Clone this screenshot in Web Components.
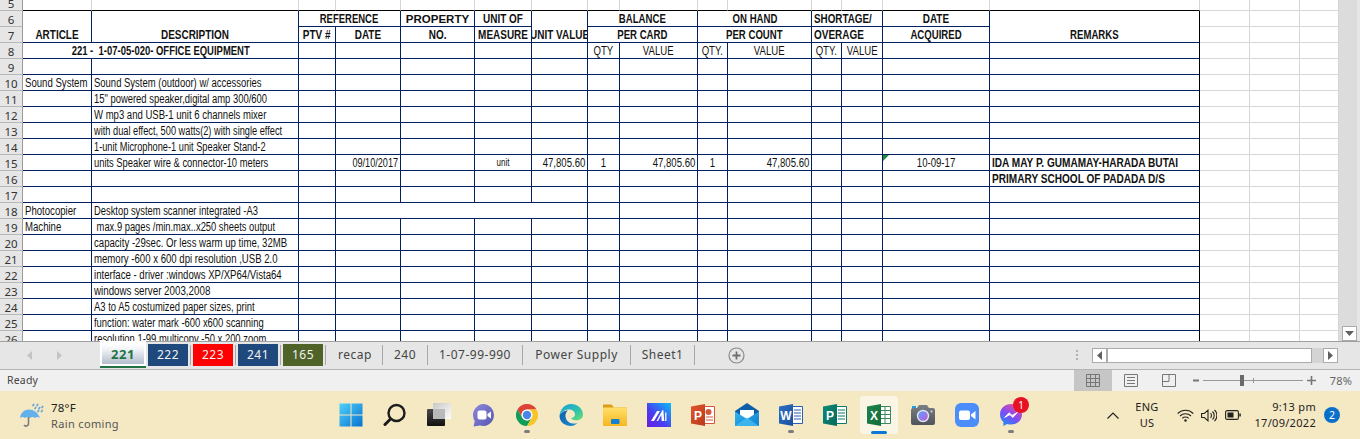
<!DOCTYPE html>
<html>
<head>
<meta charset="utf-8">
<title>Excel sheet</title>
<style>
  html, body { margin: 0; padding: 0; width: 1360px; height: 439px; overflow: hidden; background: #e6e6e6; }
  body { display: flex; flex-direction: column; font-family: "Noto Sans", sans-serif; }
</style>
</head>
<body>
<xl-sheet></xl-sheet>
<xl-tabbar>
  <xl-tab kind="active">221</xl-tab>
  <xl-tab color="#1f497d">222</xl-tab>
  <xl-tab color="#ff0000">223</xl-tab>
  <xl-tab color="#1f497d">241</xl-tab>
  <xl-tab color="#4f6228">165</xl-tab>
  <xl-tab width="55">recap</xl-tab>
  <xl-tab width="45">240</xl-tab>
  <xl-tab width="95">1-07-99-990</xl-tab>
  <xl-tab width="108">Power Supply</xl-tab>
  <xl-tab width="64">Sheet1</xl-tab>
</xl-tabbar>
<xl-status></xl-status>
<xl-taskbar></xl-taskbar>

<script>
  // column right edges, in page pixels (the line sits on this pixel)
  const COL_LINES = [22, 91, 298, 335, 400, 474, 531, 587, 619, 697, 727, 811, 841, 882, 989, 1199, 1249, 1299, 1338];
  const FIRST_ROW = 5;
  const LAST_ROW = 26;
  const TABLE_LAST_COL = 15;

  // r row, c col, rs / cs spans, a align, k extra classes, s horizontal squeeze
  const CELLS = [
    { r: 6, c: 1, rs: 2, t: "ARTICLE", a: "c", k: "b low" },
    { r: 6, c: 2, rs: 2, t: "DESCRIPTION", a: "c", k: "b low" },
    { r: 6, c: 3, cs: 2, t: "REFERENCE", a: "c", k: "b", s: .79 },
    { r: 6, c: 5, t: "PROPERTY", a: "c", k: "b wide" },
    { r: 6, c: 6, t: "UNIT OF", a: "c", k: "b" },
    { r: 6, c: 7, rs: 2, t: "UNIT VALUE", a: "c", k: "b low" },
    { r: 6, c: 8, cs: 2, t: "BALANCE", a: "c", k: "b", s: .8 },
    { r: 6, c: 10, cs: 2, t: "ON HAND", a: "c", k: "b", s: .8 },
    { r: 6, c: 12, cs: 2, t: "SHORTAGE/", a: "l", k: "b", s: .82 },
    { r: 6, c: 14, t: "DATE", a: "c", k: "b" },
    { r: 6, c: 15, rs: 2, t: "REMARKS", a: "c", k: "b low", s: .8 },
    { r: 7, c: 3, t: "PTV #", a: "c", k: "b" },
    { r: 7, c: 4, t: "DATE", a: "c", k: "b" },
    { r: 7, c: 5, t: "NO.", a: "c", k: "b" },
    { r: 7, c: 6, t: "MEASURE", a: "c", k: "b" },
    { r: 7, c: 8, cs: 2, t: "PER CARD", a: "c", k: "b", s: .8 },
    { r: 7, c: 10, cs: 2, t: "PER COUNT", a: "c", k: "b", s: .8 },
    { r: 7, c: 12, cs: 2, t: "OVERAGE", a: "l", k: "b" },
    { r: 7, c: 14, t: "ACQUIRED", a: "c", k: "b", s: .8 },
    { r: 8, c: 1, cs: 2, t: "221 -&nbsp; 1-07-05-020- OFFICE EQUIPMENT", a: "c", k: "b", s: .79 },
    { r: 8, c: 8, t: "QTY", a: "c" },
    { r: 8, c: 9, t: "VALUE", a: "c" },
    { r: 8, c: 10, t: "QTY.", a: "c" },
    { r: 8, c: 11, t: "VALUE", a: "c" },
    { r: 8, c: 12, t: "QTY.", a: "c" },
    { r: 8, c: 13, t: "VALUE", a: "c" },
    { r: 10, c: 1, t: "Sound System" },
    { r: 10, c: 2, t: "Sound System (outdoor) w/ accessories", s: .79 },
    { r: 11, c: 2, t: "15\" powered speaker,digital amp 300/600", s: .785 },
    { r: 12, c: 2, t: "W mp3 and USB-1 unit 6 channels mixer", s: .795 },
    { r: 13, c: 2, t: "with dual effect, 500 watts(2) with single effect", s: .77 },
    { r: 14, c: 2, t: "1-unit Microphone-1 unit Speaker Stand-2", s: .77 },
    { r: 15, c: 2, t: "units Speaker wire &amp; connector-10 meters", s: .78 },
    { r: 15, c: 4, t: "09/10/2017", a: "r", s: .76 },
    { r: 15, c: 6, t: "unit", a: "c", k: "small" },
    { r: 15, c: 7, t: "47,805.60", a: "r" },
    { r: 15, c: 8, t: "1", a: "c" },
    { r: 15, c: 9, t: "47,805.60", a: "r" },
    { r: 15, c: 10, t: "1", a: "c" },
    { r: 15, c: 11, t: "47,805.60", a: "r" },
    { r: 15, c: 14, t: "10-09-17", a: "c", k: "flag" },
    { r: 15, c: 15, t: "IDA MAY P. GUMAMAY-HARADA BUTAI", k: "b", s: .84 },
    { r: 16, c: 15, t: "PRIMARY SCHOOL OF PADADA D/S", k: "b", s: .84 },
    { r: 18, c: 1, t: "Photocopier" },
    { r: 18, c: 2, t: "Desktop system scanner integrated -A3", s: .78 },
    { r: 18, c: 4, cs: 4, t: "" },
    { r: 19, c: 1, t: "Machine" },
    { r: 19, c: 2, t: "&nbsp;max.9 pages /min.max..x250 sheets output", s: .78 },
    { r: 20, c: 2, t: "capacity -29sec. Or less warm up time, 32MB" },
    { r: 21, c: 2, t: "memory -600 x 600 dpi resolution ,USB 2.0", s: .8 },
    { r: 22, c: 2, t: "interface - driver :windows XP/XP64/Vista64", s: .8 },
    { r: 23, c: 2, t: "windows server 2003,2008", s: .815 },
    { r: 24, c: 2, t: "A3 to A5 costumized paper sizes, print", s: .787 },
    { r: 25, c: 2, t: "function: water mark -600 x600 scanning", s: .785 },
    { r: 26, c: 2, t: "resolution 1-99 multicopy -50 x 200 zoom", s: .785 }
  ];

  class XlSheet extends HTMLElement {
    constructor() {
      super();
      this.attachShadow({ mode: "open" });
    }

    connectedCallback() {
      this.render();
    }

    buildCells() {
      const widths = COL_LINES.map((x, i) => (i === 0 ? x + 1 : x - COL_LINES[i - 1]));
      const taken = new Set();
      const specs = new Map();
      CELLS.forEach(s => {
        specs.set(s.r + ":" + s.c, s);
        for (let r = s.r; r < s.r + (s.rs || 1); r++) {
          for (let c = s.c; c < s.c + (s.cs || 1); c++) {
            if (r !== s.r || c !== s.c) taken.add(r + ":" + c);
          }
        }
      });

      let html = "";
      for (let r = FIRST_ROW; r <= LAST_ROW; r++) {
        html += `<div class="head ${r === 5 ? "clip" : ""}" style="grid-row:${r - 4};grid-column:1"><span>${r}</span></div>`;
        for (let c = 1; c < COL_LINES.length; c++) {
          const key = r + ":" + c;
          if (taken.has(key)) continue;
          const s = specs.get(key) || {};
          const inTable = r >= 6 && c <= TABLE_LAST_COL;
          const endRow = r + (s.rs || 1) - 1;
          const endCol = c + (s.cs || 1) - 1;
          const cls = ["cell", inTable ? "in" : "out", "a-" + (s.a || "l"), s.k || ""];
          if (r === 5 && c <= TABLE_LAST_COL) cls.push("top");
          if (endCol === TABLE_LAST_COL && r >= 6) cls.push("edge");
          const squeeze = s.s ? ` style="--sx:${s.s}"` : "";
          const text = s.t ? `<span${squeeze}>${s.t}</span>` : "";
          html += `<div class="${cls.join(" ")}" style="grid-row:${r - 4}/${endRow - 3};grid-column:${c + 1}/${endCol + 2}">${text}</div>`;
        }
      }
      return { html, widths };
    }

    render() {
      const { html, widths } = this.buildCells();
      this.shadowRoot.innerHTML = `
        <style>
          :host { display: flex; height: 342px; box-sizing: border-box; border-bottom: 1px solid #a0a0a0; flex: none; }

          .grid {
            width: 1339px;
            height: 341px;
            overflow: hidden;
            background: #fff;
            display: grid;
            grid-template-columns: ${widths.map(w => w + "px").join(" ")};
            grid-template-rows: 11px repeat(${LAST_ROW - 5}, 16px);
            font-family: "Liberation Sans", Arial, sans-serif;
            font-size: 12px;
            color: #111;
          }

          .head {
            box-sizing: border-box;
            background: #e6e6e6;
            border-right: 1px solid #9a9a9a;
            border-bottom: 1px solid #b8b8b8;
            padding-top: 1px;
            display: flex;
            align-items: center;
            justify-content: center;
            overflow: hidden;
            font: 11.5px "Noto Sans", sans-serif;
            color: #333;
          }
          .head.clip { align-items: flex-end; padding-top: 0; }
          .head.clip span { line-height: 14px; margin-bottom: -1px; }

          .cell {
            box-sizing: border-box;
            border-right: 1px solid #d6d6d6;
            border-bottom: 1px solid #d6d6d6;
            padding-top: 1px;
            display: flex;
            align-items: center;
            overflow: hidden;
            white-space: nowrap;
            position: relative;
            line-height: 14px;
          }
          .cell.in { border-color: #002060; }
          .cell.top { border-bottom-color: #000; }
          .cell.edge { border-right-color: #000; }
          .cell span {
            flex: none;
            display: inline-block;
            transform: scaleX(var(--sx, .8));
          }
          .a-l { justify-content: flex-start; padding-left: 2px; }
          .a-l span { transform-origin: left center; }
          .a-c { justify-content: center; }
          .a-r { justify-content: flex-end; padding-right: 2px; }
          .a-r span { transform-origin: right center; }
          .b { font-weight: 700; --sx: .83; }
          .low { align-items: flex-end; }
          .wide { --sx: 1; font-size: 11.5px; }
          .small { font-size: 10px; }
          .flag::before {
            content: "";
            position: absolute;
            left: 0;
            top: 0;
            border-top: 6px solid #1e8a3c;
            border-right: 6px solid transparent;
          }

          .vscroll {
            width: 21px;
            background: linear-gradient(to right, #dcdcdc 18px, #e6e6e6 18px);
            display: flex;
            align-items: flex-end;
          }
          .down {
            box-sizing: border-box;
            width: 15px;
            height: 15px;
            margin-left: 3px;
            background: #fff;
            border: 1px solid #ababab;
            display: flex;
            align-items: center;
            justify-content: center;
          }
        </style>
        <div class="grid">${html}</div>
        <div class="vscroll">
          <div class="down"><svg width="9" height="5"><path d="M0 0h9L4.500 5z" fill="#606060"/></svg></div>
        </div>
      `;
    }
  }

  class XlTab extends HTMLElement {
    constructor() {
      super();
      this.attachShadow({ mode: "open" });
    }

    connectedCallback() {
      const color = this.getAttribute("color");
      const width = this.getAttribute("width");
      const active = this.getAttribute("kind") === "active";
      let host = `width:${width || 45}px;`;
      let face = "";
      if (active) {
        host = "width:46px;margin-right:2px;";
        face = `
          .face {
            box-sizing: border-box;
            width: 46px; height: 25px; margin-top: -3px;
            background: linear-gradient(#fff, #f3f5f8 25%, #aab6c6);
            border: 2px solid #fff;
            border-bottom: 0;
            box-shadow: inset 0 -2px 0 #fff, 0 2px 0 #217346;
            color: #217346;
            font-weight: 700;
            font-size: 13px;
          }
          .sep { display: none; }`;
      } else if (color) {
        face = `
          .face { width: 40px; height: 22px; background: ${color}; color: #f2f2f2; }
          .sep { margin-left: 2px; }`;
      } else {
        face = `
          .face { flex: 1; height: 22px; color: #444; }`;
      }
      this.shadowRoot.innerHTML = `
        <style>
          :host { display: flex; flex: none; align-items: flex-start; ${host} }
          .face {
            display: flex; align-items: center; justify-content: center;
            font: 12px/1 "Noto Sans", sans-serif;
            letter-spacing: .5px;
            white-space: nowrap;
          }
          .sep { width: 1px; height: 20px; margin-top: 1px; background: #a8a8a8; flex: none; }
          ${face}
        </style>
        <div class="face"><slot></slot></div>
        <div class="sep"></div>
      `;
    }
  }

  class XlTabbar extends HTMLElement {
    constructor() {
      super();
      this.attachShadow({ mode: "open" });
    }

    connectedCallback() {
      this.shadowRoot.innerHTML = `
        <style>
          :host {
            display: flex;
            flex: none;
            box-sizing: border-box;
            height: 28px;
            padding-top: 2px;
            background: #e6e6e6;
            border-bottom: 1px solid #b4b4b4;
          }
          .nav { width: 100px; height: 22px; display: flex; flex: none; align-items: center; padding-left: 27px; gap: 25px; box-sizing: border-box; }
          .tabs { display: flex; flex: none; }
          .add { flex: none; margin-left: 33px; margin-top: 3px; }
          .dots { flex: none; margin-left: 331px; margin-top: 6px; display: flex; flex-direction: column; gap: 2px; }
          .dots i { width: 2px; height: 2px; background: #b0b0b0; display: block; }
          .hscroll { flex: none; display: flex; margin-left: 14px; margin-top: 4px; width: 246px; height: 15px; background: #d4d4d4; }
          .btn { box-sizing: border-box; width: 15px; height: 15px; background: #fff; border: 1px solid #ababab; display: flex; align-items: center; justify-content: center; flex: none; }
          .thumb { box-sizing: border-box; width: 205px; height: 15px; background: #fff; border: 1px solid #ababab; flex: none; }
          .spring { flex: 1; }
        </style>
        <div class="nav">
          <svg width="5" height="9"><path d="M5 0v9L0 4.500z" fill="#c4c4c4"/></svg>
          <svg width="5" height="9"><path d="M0 0v9L5 4.500z" fill="#c4c4c4"/></svg>
        </div>
        <div class="tabs"><slot></slot></div>
        <svg class="add" width="17" height="17" viewBox="0 0 17 17">
          <circle cx="8.500" cy="8.500" r="7.500" fill="none" stroke="#8a8a8a" stroke-width="1.200"/>
          <path d="M8.500 4.500v8M4.500 8.500h8" stroke="#6e6e6e" stroke-width="1.800"/>
        </svg>
        <div class="dots"><i></i><i></i><i></i></div>
        <div class="hscroll">
          <div class="btn"><svg width="5" height="9"><path d="M5 0v9L0 4.500z" fill="#606060"/></svg></div>
          <div class="thumb"></div>
          <div class="spring"></div>
          <div class="btn"><svg width="5" height="9"><path d="M0 0v9L5 4.500z" fill="#606060"/></svg></div>
        </div>
      `;
    }
  }

  class XlStatus extends HTMLElement {
    constructor() {
      super();
      this.attachShadow({ mode: "open" });
    }

    connectedCallback() {
      this.shadowRoot.innerHTML = `
        <style>
          :host {
            display: flex;
            flex: none;
            height: 21px;
            background: #f0f0f0;
            align-items: center;
            font: 10.5px "Noto Sans", sans-serif;
            color: #444;
            letter-spacing: .2px;
          }
          .ready { padding-left: 7px; flex: 1; padding-bottom: 1px; }
          .view { width: 38px; height: 21px; display: flex; align-items: center; justify-content: center; flex: none; }
          .view.on { background: #c6c6c6; }
          .zoom { display: flex; align-items: center; width: 132px; flex: none; padding-left: 5px; box-sizing: border-box; }
          .pct { width: 32px; text-align: right; flex: none; padding-right: 8px; padding-bottom: 1px; color: #666; font-size: 11px; }
          .bar { position: relative; width: 100px; height: 1px; background: #999; margin: 0 4px; flex: none; }
          .bar i { position: absolute; left: 37px; top: -5px; width: 4px; height: 11px; background: #6a6a6a; }
          .bar b { position: absolute; left: 50px; top: -2px; width: 1px; height: 5px; background: #999; }
        </style>
        <div class="ready">Ready</div>
        <div class="view on"><svg width="14" height="13"><path d="M.5.5h13v12H.5zM.5 4.500h13M.5 8.500h13M4.500.5v12M9.500.5v12" fill="none" stroke="#777"/></svg></div>
        <div class="view"><svg width="14" height="13"><path d="M.5.5h13v12H.5z" fill="none" stroke="#777"/><path d="M3 3.500h8M3 6.500h8M3 9.500h8" stroke="#777"/></svg></div>
        <div class="view"><svg width="14" height="13"><path d="M.5.5h13v12H.5zM.5 7.500h6.500V.5" fill="none" stroke="#777"/></svg></div>
        <div class="zoom">
          <svg width="6" height="3"><path d="M0 .5h6v2H0z" fill="#777"/></svg>
          <div class="bar"><i></i><b></b></div>
          <svg width="9" height="9"><path d="M3.700 0h1.600v9H3.700zM0 3.700h9v1.600H0z" fill="#777"/></svg>
        </div>
        <div class="pct">78%</div>
      `;
    }
  }

  class XlApp extends HTMLElement {
    constructor() {
      super();
      this.attachShadow({ mode: "open" });
    }

    connectedCallback() {
      this.shadowRoot.innerHTML = `
        <style>
          :host {
            display: flex;
            flex: none;
            position: relative;
            width: 44px;
            height: 48px;
            align-items: center;
            justify-content: center;
          }
          :host([active])::before {
            content: "";
            position: absolute;
            left: 3px; top: 5px;
            width: 38px; height: 38px;
            border-radius: 4px;
            background: #faf5e4;
          }
          ::slotted(svg) { position: relative; }
          .dot { display: none; position: absolute; left: 19px; bottom: 6px; width: 6px; height: 3px; border-radius: 2px; background: #7d7d7d; }
          :host([running]) .dot { display: block; }
          :host([active]) .dot { display: block; left: 14px; width: 16px; bottom: 5px; height: 3px; background: #0a78d4; }
        </style>
        <slot></slot>
        <div class="dot"></div>
      `;
    }
  }

  // the four office tiles are the same shape: a page behind, a coloured leaf with a real text letter
  function officeIcon(id, dark, light, letter, page) {
    return `<svg width="24" height="24" viewBox="0 0 24 24">
      <defs><linearGradient id="${id}" x1="0" y1="0" x2="1" y2="1"><stop offset="0" stop-color="${light}"/><stop offset="1" stop-color="${dark}"/></linearGradient></defs>
      ${page}
      <path d="M0 3.500 14 1v22L0 20.500z" fill="url(#${id})"/>
      <text x="7" y="16.500" text-anchor="middle" font-family="Liberation Sans" font-weight="700" font-size="12" fill="#fff">${letter}</text>
    </svg>`;
  }

  const linesPage = c => `<path d="M13.500 3.500h10v17h-10z" fill="#fff" stroke="${c}"/><path d="M15 7h7M15 10h7M15 13h7M15 16h7" stroke="${c}" stroke-width="1"/>`;

  const ICONS = {
    start: `<svg width="24" height="24" viewBox="0 0 24 24">
      <defs><linearGradient id="st" x1="0" y1="0" x2="1" y2="1"><stop offset="0" stop-color="#4fd0fb"/><stop offset="1" stop-color="#0673cf"/></linearGradient></defs>
      <path d="M.5.5h11v11H.5zM12.500.5h11v11h-11zM.5 12.500h11v11H.5zM12.500 12.500h11v11h-11z" fill="url(#st)"/>
    </svg>`,
    search: `<svg width="24" height="24" viewBox="0 0 24 24" fill="none" stroke="#1c1c1c">
      <circle cx="13.500" cy="10" r="8" stroke-width="2.400"/>
      <path d="M7.500 16 2 21.500" stroke-width="3" stroke-linecap="round"/>
    </svg>`,
    task: `<svg width="24" height="24" viewBox="0 0 24 24">
      <defs>
        <linearGradient id="tk" x1="0" y1="0" x2="0" y2="1"><stop offset="0" stop-color="#4a4a4a"/><stop offset="1" stop-color="#111"/></linearGradient>
        <linearGradient id="tw" x1="0" y1="0" x2="1" y2="1"><stop offset="0" stop-color="#c8c8c8"/><stop offset="1" stop-color="#fdfdfd"/></linearGradient>
      </defs>
      <rect x="0" y="6" width="18" height="17" rx="1" fill="url(#tk)"/>
      <rect x="6" y="0" width="18" height="16" rx="1" fill="url(#tw)"/>
      <rect x="6" y="6" width="12" height="10" fill="#b9b9b9"/>
    </svg>`,
    meet: `<svg width="24" height="24" viewBox="0 0 24 24">
      <defs><linearGradient id="mt" x1="0" y1="0" x2="1" y2="1"><stop offset="0" stop-color="#8f86dd"/><stop offset="1" stop-color="#5557b0"/></linearGradient></defs>
      <path d="M12 1a11 11 0 1 1-3 21.600L2.500 23.500 3.800 18A11 11 0 0 1 12 1z" fill="url(#mt)"/>
      <rect x="6.500" y="7.500" width="9" height="9" rx="2" fill="#fff"/>
      <path d="M16.500 11 20 8.500v7L16.500 13z" fill="#fff"/>
    </svg>`,
    chrome: `<svg width="24" height="24" viewBox="0 0 24 24">
      <path d="M12 1a11 11 0 0 0-9.530 5.500l4.770 8.250A5.500 5.500 0 0 1 12 6.500h9.530A11 11 0 0 0 12 1z" fill="#db4437"/>
      <path d="M2.470 6.500A11 11 0 0 0 12 23l4.760-8.250a5.500 5.500 0 0 1-9.520 0z" fill="#0f9d58"/>
      <path d="M21.530 6.500H12a5.500 5.500 0 0 1 4.760 8.250L12 23A11 11 0 0 0 21.530 6.500z" fill="#f7c52a"/>
      <circle cx="12" cy="12" r="5.400" fill="#fff"/>
      <circle cx="12" cy="12" r="4.200" fill="#4a86e8"/>
    </svg>`,
    edge: `<svg width="24" height="24" viewBox="0 0 24 24">
      <defs>
        <linearGradient id="eg" x1="0" y1="0" x2="1" y2="1"><stop offset="0" stop-color="#1b9de2"/><stop offset=".6" stop-color="#30c5a8"/><stop offset="1" stop-color="#6fe06c"/></linearGradient>
        <linearGradient id="eb" x1="0" y1="0" x2="1" y2="1"><stop offset="0" stop-color="#0f5ea8"/><stop offset="1" stop-color="#1a8fd8"/></linearGradient>
      </defs>
      <path d="M12 1c6.500 0 12 4.800 12 10.500 0 3.600-3 5.800-6.500 5.800-2.600 0-4.700-.9-5.400-2.300 2.200 0 3.900-1.400 3.900-3.500 0-3.400-3.600-5.300-7-4.900C5 7.100 1.600 9.900.5 12.700 1 6.200 5.800 1 12 1z" fill="url(#eg)"/>
      <path d="M.5 12.700C1.700 9.500 5.300 7.400 8.800 7.400c-2.500 2-2.800 5.100-1.800 8 1.500 4.300 6.600 6.300 11.500 4.600C16.300 22 14.200 23 12 23 5.700 23 .5 18.700.5 12.700z" fill="url(#eb)"/>
    </svg>`,
    files: `<svg width="24" height="24" viewBox="0 0 24 24">
      <defs><linearGradient id="fl" x1="0" y1="0" x2="0" y2="1"><stop offset="0" stop-color="#ffdf6a"/><stop offset="1" stop-color="#f8b61e"/></linearGradient></defs>
      <path d="M0 1.500h8.500l2.500 3h13v4H0z" fill="#d99e17"/>
      <rect x="0" y="4.500" width="24" height="18.500" rx="1" fill="url(#fl)"/>
      <rect x="8" y="16" width="8.500" height="5" rx="1" fill="#1480cf"/>
    </svg>`,
    mail365: `<svg width="24" height="24" viewBox="0 0 24 24">
      <defs><linearGradient id="ms" x1="1" y1="0" x2="0" y2="1"><stop offset="0" stop-color="#0bbcf6"/><stop offset=".6" stop-color="#4a3df0"/><stop offset="1" stop-color="#6a1be2"/></linearGradient></defs>
      <rect width="24" height="24" fill="url(#ms)"/>
      <path d="M4 18 10 8h3l-6 10zM9.500 18 15.500 7l.8 0 1 11h-2.600l-.4-6-3.300 6z" fill="#fff"/>
      <path d="M18 9.500h1.500v8.500H18z" fill="#fff" opacity=".85"/>
    </svg>`,
    ppt: officeIcon("pp", "#b93a1b", "#e0552c", "P", `<path d="M13.500 3.500h10v17h-10z" fill="#fff" stroke="#d4573a"/><circle cx="17.500" cy="9" r="3" fill="#d4573a"/><path d="M15 14h7M15 17h7" stroke="#d4573a"/>`),
    mail: `<svg width="24" height="24" viewBox="0 0 24 24">
      <defs><linearGradient id="ml" x1="0" y1="0" x2="1" y2="1"><stop offset="0" stop-color="#33b5ee"/><stop offset="1" stop-color="#0f7fd0"/></linearGradient></defs>
      <path d="M12 0 24 8v2L12 18 0 10V8z" fill="#0d5ea8"/>
      <path d="M5 7h14v7l-7 4-7-4z" fill="#fff"/>
      <path d="M0 8.500 12 16l12-7.500V23H0z" fill="url(#ml)"/>
      <path d="M0 23 12 14.500 24 23z" fill="#46c0f2" opacity=".75"/>
    </svg>`,
    word: officeIcon("wd", "#1c4f9c", "#2f6fc6", "W", linesPage("#2b5fb0")),
    pub: officeIcon("pb", "#056a5c", "#0b8a78", "P", linesPage("#0b7a6a")),
    excel: officeIcon("xl", "#146b3a", "#1f8449", "X", `<path d="M13.500 3.500h10v17h-10z" fill="#fff" stroke="#3c8a5c"/><path d="M14 7.500h9M14 11.500h9M14 15.500h9M18 4v16" stroke="#3c8a5c"/>`),
    camera: `<svg width="24" height="24" viewBox="0 0 24 24">
      <defs><linearGradient id="ln" x1="0" y1="0" x2="1" y2="1"><stop offset="0" stop-color="#5aa2ff"/><stop offset="1" stop-color="#c55ad8"/></linearGradient>
      <linearGradient id="bd" x1="0" y1="0" x2="0" y2="1"><stop offset="0" stop-color="#7a7f86"/><stop offset="1" stop-color="#50545a"/></linearGradient></defs>
      <path d="M1 3h4v3H1z" fill="#1b9de2"/>
      <path d="M8 2h8l2 3h4a2 2 0 0 1 2 2v13a2 2 0 0 1-2 2H2a2 2 0 0 1-2-2V7a2 2 0 0 1 2-2h4z" fill="url(#bd)"/>
      <circle cx="12" cy="13" r="6.200" fill="#dfe6f2"/>
      <circle cx="12" cy="13" r="4.800" fill="url(#ln)"/>
      <circle cx="20.500" cy="8.500" r="1" fill="#dcdcdc"/>
    </svg>`,
    zoom: `<svg width="24" height="24" viewBox="0 0 24 24">
      <rect width="24" height="24" rx="6" fill="#4a8dfb"/>
      <rect x="4" y="7.500" width="11" height="9.500" rx="2" fill="#fff"/>
      <path d="M16 11.500 20.500 8v8.500L16 13z" fill="#fff"/>
    </svg>`,
    messenger: `<svg width="24" height="24" viewBox="0 0 24 24">
      <defs><linearGradient id="mg" x1=".2" y1="1" x2=".8" y2="0"><stop offset="0" stop-color="#1d90f5"/><stop offset=".45" stop-color="#7a4df5"/><stop offset="1" stop-color="#f0499d"/></linearGradient></defs>
      <path d="M12 1C5.800 1 1 5.500 1 11.500c0 3.100 1.300 5.800 3.400 7.600V23l3.700-2c1.200.4 2.500.6 3.900.6 6.200 0 11-4.500 11-10.100S18.200 1 12 1z" fill="url(#mg)"/>
      <path d="M5.500 14.500 10 9.800l3 2.600 5.500-3-4.600 5-3-2.700z" fill="#fff" stroke="#fff" stroke-width=".8"/>
    </svg>`
  };

  class XlTaskbar extends HTMLElement {
    constructor() {
      super();
      this.attachShadow({ mode: "open" });
    }

    connectedCallback() {
      const apps = [
        ["start"], ["search"], ["task"], ["meet"], ["chrome", "running"], ["edge"], ["files"], ["mail365"],
        ["ppt"], ["mail"], ["word", "running"], ["pub"], ["excel", "active"], ["camera"], ["zoom"], ["messenger", "running"]
      ];
      const items = apps.map(([name, state]) => {
        const badge = name === "messenger" ? `<span class="note">1</span>` : "";
        return `<xl-app ${state || ""}>${ICONS[name]}${badge}</xl-app>`;
      }).join("");

      this.shadowRoot.innerHTML = `
        <style>
          :host {
            display: grid;
            flex: none;
            grid-template-columns: 329px auto 1fr;
            height: 48px;
            background: #f5e9c3;
            font: 12px "Noto Sans", sans-serif;
            color: #222;
          }
          .weather { display: flex; align-items: center; padding-left: 20px; gap: 7px; }
          .weather div { line-height: 16px; font-size: 11.5px; letter-spacing: .2px; padding-top: 2px; }
          .weather small { display: block; font-size: 11px; color: #555; letter-spacing: .35px; }
          .apps { display: flex; }
          .note {
            position: absolute;
            left: 24px; top: 6px;
            width: 16px; height: 16px;
            border-radius: 50%;
            background: #e81123;
            color: #fff;
            font-size: 10px;
            line-height: 16px;
            text-align: center;
          }
          .tray { display: flex; align-items: center; justify-content: flex-end; padding-right: 20px; }
          .chev { width: 26px; display: flex; justify-content: center; }
          .lang { width: 42px; text-align: center; line-height: 16px; font-size: 11px; letter-spacing: .3px; }
          .sys { width: 24px; display: flex; justify-content: center; }
          .wifi { margin-left: 5px; }
          .clock { width: 71px; text-align: right; line-height: 16px; font-size: 11px; letter-spacing: .3px; }
          .count {
            width: 16px; height: 16px; margin-left: 8px;
            border-radius: 50%;
            background: #0a6fc9;
            color: #fff;
            font-size: 10.5px;
            line-height: 16px;
            text-align: center;
          }
        </style>
        <div class="weather">
          <svg width="24" height="24" viewBox="0 0 24 24">
            <path d="M0 15C.6 9.500 4.500 6.500 9 6.500s8.800 2.800 11 8.500c-1.700-1.300-3.300-1.300-5 0-1.500-1.200-3.500-1.200-5 0-1.500-1.200-3.500-1.200-5 0C3.300 13.800 1.700 13.800 0 15z" fill="#63b1ec"/>
            <path d="M8.500 14v7a2.500 2.500 0 0 1-4.500 1" fill="none" stroke="#7d7d7d" stroke-width="1.600"/>
            <path d="M13 2.500l.7-1M17 2.500l.7-1M15 5.500l.7-1M19 5.500l.7-1M22 4.500l.7-1M18 8.500l.7-1M21.500 8.500l.7-1" stroke="#6aa5d8" stroke-width="1.700" stroke-linecap="round"/>
          </svg>
          <div>78°F<small>Rain coming</small></div>
        </div>
        <div class="apps">${items}</div>
        <div class="tray">
          <div class="chev"><svg width="12" height="7"><path d="M.5 6.500 6 1l5.500 5.500" fill="none" stroke="#222" stroke-width="1.200"/></svg></div>
          <div class="lang">ENG<br>US</div>
          <div class="sys wifi"><svg width="17" height="13" viewBox="0 0 17 13" fill="none" stroke="#222" stroke-width="1.100"><path d="M.7 4.500a11 11 0 0 1 15.600 0M3 7a8 8 0 0 1 11 0M5.300 9.300a4.700 4.700 0 0 1 6.400 0"/><circle cx="8.500" cy="11.500" r="1.200" fill="#222" stroke="none"/></svg></div>
          <div class="sys"><svg width="16" height="13" viewBox="0 0 16 13" fill="none" stroke="#222" stroke-width="1.100"><path d="M.6 4.500h2.700L7 1.200v10.600L3.300 8.500H.6zM9.500 4.200a3.200 3.200 0 0 1 0 4.600M11.500 2.500a5.500 5.500 0 0 1 0 8M13.500.8a8 8 0 0 1 0 11.400"/></svg></div>
          <div class="sys"><svg width="16" height="10" viewBox="0 0 16 10"><rect x=".6" y=".6" width="12.800" height="8.800" rx="1.500" fill="none" stroke="#222" stroke-width="1.100"/><rect x="2.500" y="2.500" width="6" height="5" fill="#222"/><rect x="14.300" y="3.500" width="1.500" height="3" fill="#222"/></svg></div>
          <div class="clock">9:13 pm<br>17/09/2022</div>
          <div class="count">2</div>
        </div>
      `;
    }
  }

  customElements.define("xl-sheet", XlSheet);
  customElements.define("xl-tab", XlTab);
  customElements.define("xl-tabbar", XlTabbar);
  customElements.define("xl-status", XlStatus);
  customElements.define("xl-app", XlApp);
  customElements.define("xl-taskbar", XlTaskbar);
</script>
</body>
</html>
